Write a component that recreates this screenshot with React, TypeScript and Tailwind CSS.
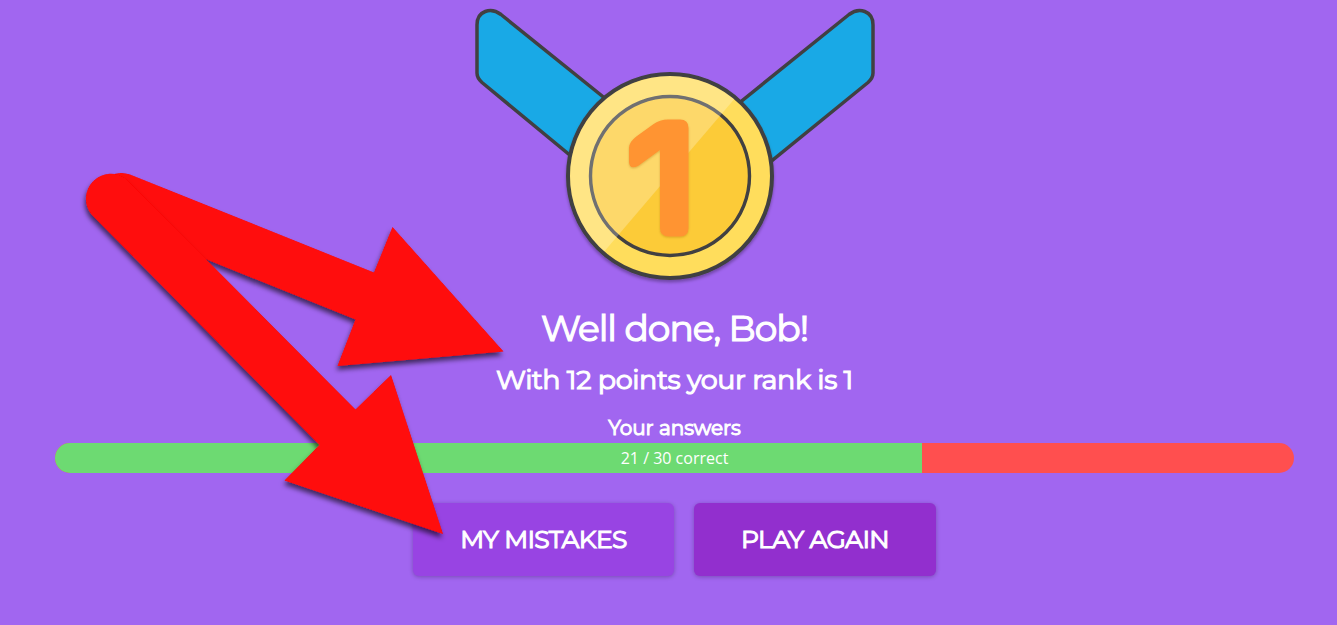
const CORRECT = 21
const TOTAL = 30

function Medal() {
  return (
    <svg width="410" height="290" viewBox="470 0 410 290" className="block shrink-0">
      <defs>
        <filter id="medal-shadow" x="-10%" y="-10%" width="120%" height="125%">
          <feDropShadow dx="0" dy="2.5" stdDeviation="1.8" floodColor="#000" floodOpacity="0.3" />
        </filter>
        <filter id="digit-shadow" x="-20%" y="-10%" width="140%" height="120%">
          <feDropShadow dx="0" dy="1" stdDeviation="1.2" floodColor="#a06000" floodOpacity="0.35" />
        </filter>
        <clipPath id="medal-shine">
          <path d="M545 321L794 29L520 0Z" />
        </clipPath>
      </defs>

      {/* Ribbons */}
      <g fill="#19a9e6" stroke="#414042" strokeWidth="3.5" strokeLinejoin="round">
        <path d="M477 25C477 10.500 491 7 501 14.500L640 126.500V213L482 82.500Q477 78 477 73Z" />
        <path d="M873 25C873 10.500 859 7 849 14.500L710 126.500V211L868 82.500Q873 78 873 73Z" />
      </g>

      {/* Coin */}
      <circle cx="670" cy="176" r="102" fill="#ffdd5b" stroke="#414042" strokeWidth="4" filter="url(#medal-shadow)" />
      <circle cx="670" cy="176" r="79.500" fill="#fccb38" stroke="#414042" strokeWidth="3.4" />
      <g clipPath="url(#medal-shine)">
        <circle cx="670" cy="176" r="100" fill="#fff" fillOpacity="0.25" />
      </g>
      <path
        d="M629 148Q629 142 637 136L653 124.500Q660 119.500 668 119.500H680Q688.500 119.500 688.500 128V228Q688.500 236.500 680 236.500H669Q660 236.500 660 228V150L638 166Q629.500 170 629 162Z"
        fill="#ff9430"
        filter="url(#digit-shadow)"
      />
    </svg>
  )
}

function Arrows() {
  return (
    <svg
      width="540"
      height="580"
      viewBox="0 0 540 580"
      className="pointer-events-none absolute left-0 top-0"
    >
      <defs>
        <filter id="arrow-shadow" x="-10%" y="-10%" width="120%" height="120%">
          <feDropShadow dx="-1" dy="4" stdDeviation="2.5" floodColor="#000" floodOpacity="0.6" />
        </filter>
      </defs>
      <g fill="#ff0808">
        <path
          d="M130 174.500L374 272.500L392.500 227L503.500 351.500L337.500 366L355.500 319.500L112.400 221.400A25 25 0 0 1 130 174.500Z"
          filter="url(#arrow-shadow)"
        />
        <path
          d="M126.500 179.200L355.500 409.500L391 375L443 534L284.500 480.500L319.500 445L91.500 214.500A25 25 0 0 1 126.500 179.200Z"
          filter="url(#arrow-shadow)"
        />
      </g>
    </svg>
  )
}

export default function App() {
  return (
    <main className="relative h-[625px] w-full overflow-hidden bg-[#a166f0] pl-[55px] pr-[43px] font-['Montserrat','Inter',sans-serif] text-white">
      <div className="flex flex-col items-center">
        <Medal />

        <h1 className="mt-[14px] whitespace-nowrap text-[36px] font-normal leading-[48px] tracking-[-1px] [-webkit-text-stroke:1.2px_white]">
          Well done, Bob!
        </h1>
        <h2 className="mt-[10px] whitespace-nowrap text-[27px] font-normal leading-9 tracking-[-0.4px] [-webkit-text-stroke:1.1px_white]">
          With 12 points your rank is 1
        </h2>
        <h3 className="mt-[17px] whitespace-nowrap text-[20px] font-normal leading-[27px] [-webkit-text-stroke:1px_white]">
          Your answers
        </h3>

        {/* Answers bar */}
        <div className="relative mt-px flex h-[30px] w-full overflow-hidden rounded-full bg-[#ff4f4f]">
          <div className="bg-[#6dda72]" style={{ width: `${(CORRECT / TOTAL) * 100}%` }} />
          <span className="absolute inset-0 text-center font-['Open_Sans',sans-serif] text-base leading-[30px]">
            {CORRECT} / {TOTAL} correct
          </span>
        </div>

        <div className="mt-[30px] flex gap-5">
          <button className="h-[73px] w-[261px] whitespace-nowrap rounded-md bg-[#9844e3] text-[25px] font-normal tracking-[-0.65px] shadow-[0_1px_4px_rgba(0,0,0,0.25)] [-webkit-text-stroke:1.1px_white]">
            MY MISTAKES
          </button>
          <button className="h-[73px] w-[242px] whitespace-nowrap rounded-md bg-[#922fce] text-[25px] font-normal tracking-[-0.65px] shadow-[0_1px_4px_rgba(0,0,0,0.25)] [-webkit-text-stroke:1.1px_white]">
            PLAY AGAIN
          </button>
        </div>
      </div>

      <Arrows />
    </main>
  )
}
